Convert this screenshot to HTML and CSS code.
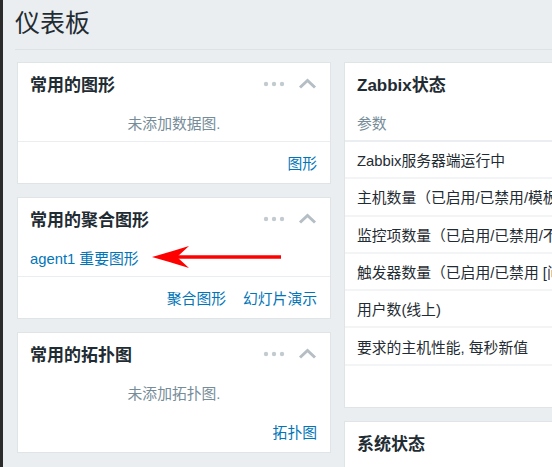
FILE: index.html
```html
<!DOCTYPE html>
<html lang="zh">
<head>
<meta charset="utf-8">
<title>仪表板</title>
<link rel="stylesheet" href="styles.css">
</head>
<body>
<div class="side"></div>
<main class="main">
  <header class="page-header"><h1 class="page-title">仪表板</h1></header>
  <div class="dashboard">
    <div class="col">
      <section class="widget">
        <div class="w-head">
          <h4 class="w-title">常用的图形</h4>
          <div class="w-tools">
            <svg class="dots" width="22" height="6" viewBox="0 0 22 6"><circle cx="3" cy="3" r="2.2"/><circle cx="11" cy="3" r="2.2"/><circle cx="19" cy="3" r="2.2"/></svg>
            <svg class="chev" width="19" height="11" viewBox="0 0 19 11"><path d="M2 9.5 L9.5 2.5 L17 9.5"/></svg>
          </div>
        </div>
        <div class="w-body empty">未添加数据图.</div>
        <div class="w-foot"><a href="#">图形</a></div>
      </section>
      <section class="widget">
        <div class="w-head">
          <h4 class="w-title">常用的聚合图形</h4>
          <div class="w-tools">
            <svg class="dots" width="22" height="6" viewBox="0 0 22 6"><circle cx="3" cy="3" r="2.2"/><circle cx="11" cy="3" r="2.2"/><circle cx="19" cy="3" r="2.2"/></svg>
            <svg class="chev" width="19" height="11" viewBox="0 0 19 11"><path d="M2 9.5 L9.5 2.5 L17 9.5"/></svg>
          </div>
        </div>
        <div class="w-body list"><a href="#">agent1 重要图形</a></div>
        <div class="w-foot"><a href="#">聚合图形</a><a href="#">幻灯片演示</a></div>
        <svg class="arrow" width="140" height="30" viewBox="0 0 140 30"><line x1="27" y1="15" x2="131" y2="15"/><path d="M2 15 Q20 10 39 4 L27 15 L39 26 Q20 20 2 15 Z"/></svg>
      </section>
      <section class="widget">
        <div class="w-head">
          <h4 class="w-title">常用的拓扑图</h4>
          <div class="w-tools">
            <svg class="dots" width="22" height="6" viewBox="0 0 22 6"><circle cx="3" cy="3" r="2.2"/><circle cx="11" cy="3" r="2.2"/><circle cx="19" cy="3" r="2.2"/></svg>
            <svg class="chev" width="19" height="11" viewBox="0 0 19 11"><path d="M2 9.5 L9.5 2.5 L17 9.5"/></svg>
          </div>
        </div>
        <div class="w-body empty">未添加拓扑图.</div>
        <div class="w-foot"><a href="#">拓扑图</a></div>
      </section>
    </div>
    <div class="col">
      <section class="widget status">
        <div class="w-head"><h4 class="w-title">Zabbix状态</h4></div>
        <table class="status-table">
          <thead><tr><th>参数</th></tr></thead>
          <tbody>
            <tr><td>Zabbix服务器端运行中</td></tr>
            <tr><td>主机数量（已启用/已禁用/模板）</td></tr>
            <tr><td>监控项数量（已启用/已禁用/不支持的）</td></tr>
            <tr><td>触发器数量（已启用/已禁用 [问题/正常]）</td></tr>
            <tr><td>用户数(线上)</td></tr>
            <tr><td>要求的主机性能, 每秒新值</td></tr>
          </tbody>
        </table>
        <div class="status-foot"></div>
      </section>
      <section class="widget">
        <div class="w-head"><h4 class="w-title">系统状态</h4></div>
        <div class="w-body"></div>
      </section>
    </div>
  </div>
</main>
</body>
</html>
```

FILE: styles.css
```css
html, body {
  margin: 0;
  padding: 0;
  height: 100%;
  overflow: hidden;
}
body {
  display: flex;
  background: #ebeef0;
  font-family: "Liberation Sans", Arial, "Noto Sans CJK SC", sans-serif;
  font-size: 14.8px;
  color: #1f2c33;
}
.side {
  width: 3px;
  flex: none;
  background: #2b2b2b;
}
.main {
  flex: 1;
  padding-left: 12px;
  min-width: 0;
}
.page-header {
  border-bottom: 1px solid #dde2e5;
  box-sizing: border-box;
  height: 50px;
}
.page-title {
  margin: 0;
  padding-top: 7px;
  font-size: 25px;
  line-height: 32px;
  font-weight: normal;
  color: #1f2c33;
}
.dashboard {
  display: grid;
  grid-template-columns: 314px 420px;
  column-gap: 13px;
  padding: 12px 0 0 2px;
}
.col {
  display: flex;
  flex-direction: column;
  gap: 13px;
}
.widget {
  position: relative;
  background: #ffffff;
  border: 1px solid #dfe4e7;
}
.w-head {
  display: flex;
  align-items: center;
  justify-content: space-between;
  height: 41px;
  padding: 0 13px 0 12px;
}
.w-title {
  margin: 0;
  font-size: 17px;
  font-weight: bold;
  color: #1f2c33;
}
.w-tools {
  display: flex;
  align-items: center;
  gap: 13px;
}
.dots circle { fill: #c4cbd0; }
.chev path {
  fill: none;
  stroke: #b5bec4;
  stroke-width: 3;
  stroke-linecap: butt;
}
.w-body {
  height: 37px;
  display: flex;
  align-items: center;
  padding: 0 12px;
  border-bottom: 1px solid #ebeef0;
}
.w-body.empty {
  justify-content: center;
  color: #768d99;
}
.w-foot {
  height: 41px;
  display: flex;
  align-items: center;
  justify-content: flex-end;
  gap: 17px;
  padding: 0 13px;
}
a {
  color: #0275b8;
  text-decoration: none;
}
.arrow {
  position: absolute;
  left: 132px;
  top: 44px;
}
.arrow line {
  stroke: #ff0000;
  stroke-width: 3.5;
}
.arrow path { fill: #ff0000; }
.status-table {
  width: 100%;
  border-collapse: collapse;
}
.status-table th {
  text-align: left;
  font-weight: normal;
  color: #768d99;
  height: 36px;
  padding: 0 12px;
  border-bottom: 2px solid #ebeef0;
  white-space: nowrap;
}
.status-table td {
  height: 35.3px;
  padding: 0 12px;
  border-bottom: 2px solid #f2f4f5;
  white-space: nowrap;
}
.status-foot {
  height: 41px;
}
.widget:last-child .w-body { border-bottom: none; }
```
